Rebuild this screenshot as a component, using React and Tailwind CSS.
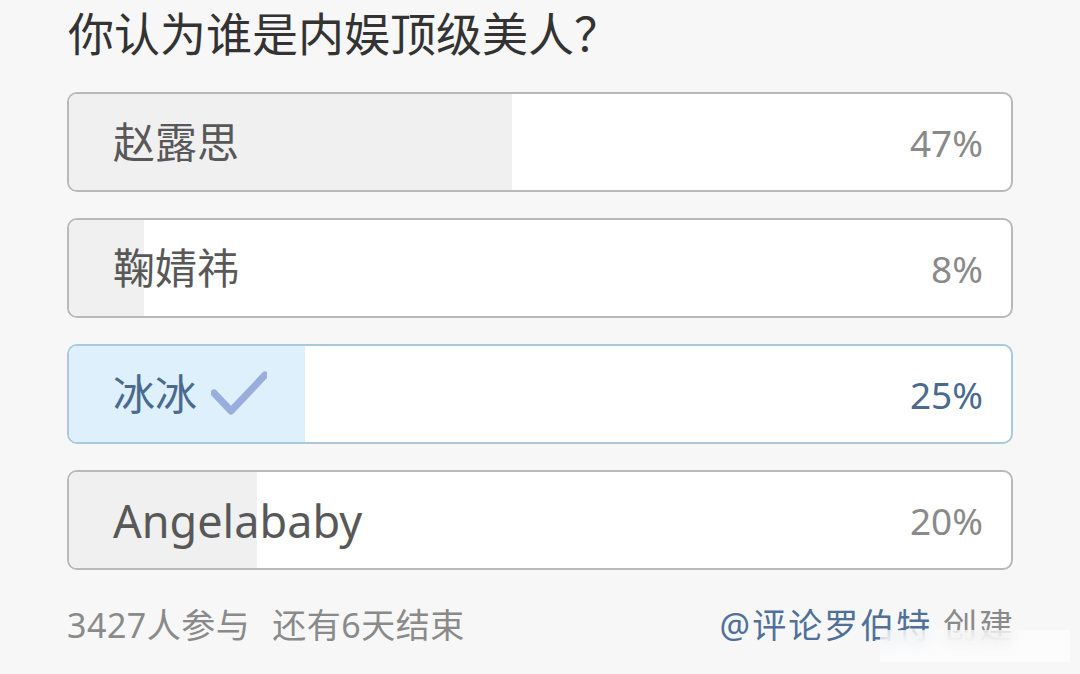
import React from "react";

const font = { fontFamily: '"Noto Sans", "Noto Sans CJK SC", sans-serif' };

function Check() {
  return (
    <svg width="56" height="46" viewBox="0 0 56 46" className="ml-[14px]">
      <path d="M3 22 L20 40 L54 4" fill="none" stroke="#9aaede" strokeWidth="7" strokeLinecap="round" strokeLinejoin="round" />
    </svg>
  );
}

function Option({ name, pct, selected, latin }) {
  return (
    <div
      className={`relative h-[100px] rounded-[10px] border-2 overflow-hidden bg-white ${selected ? "border-[#a9cadb]" : "border-[#b9b9b9]"}`}
    >
      <div
        className={`absolute left-0 top-0 bottom-0 ${selected ? "bg-[#def0fb]" : "bg-[#f0f0f0]"}`}
        style={{ width: `${pct}%` }}
      />
      <div className="relative flex h-full items-center justify-between pl-[44px] pr-[28px]">
        <div className="flex items-center">
          <span className={`${latin ? "text-[45px]" : "text-[42px]"} leading-none ${selected ? "text-[#4a6b8f]" : "text-[#585858]"}`}>{name}</span>
          {selected && <Check />}
        </div>
        <span className={`text-[37px] leading-none ${selected ? "text-[#4a6b8f]" : "text-[#8a8a8a]"}`}>{pct}%</span>
      </div>
    </div>
  );
}

export default function App() {
  return (
    <div className="relative w-[1080px] h-[674px] bg-[#f7f7f7] overflow-hidden" style={font}>
      <div className="px-[67px] pt-[10px]">
        <div className="text-[46px] leading-none text-[#333] pl-[1px]">你认为谁是内娱顶级美人？</div>
        <div className="mt-[36px] flex flex-col gap-[26px]">
          <Option name="赵露思" pct={47} />
          <Option name="鞠婧祎" pct={8} />
          <Option name="冰冰" pct={25} selected />
          <Option name="Angelababy" pct={20} latin />
        </div>
        <div className="mt-[38px] flex items-center justify-between text-[34px] leading-none">
          <div className="flex gap-[22px] text-[#8a8a8a] tracking-[0.5px]">
            <span>3427人参与</span>
            <span>还有6天结束</span>
          </div>
          <div className="text-[#8a8a8a] tracking-[2px] -mr-[2px]">
            <span className="text-[#4f7199]">@评论罗伯特</span> 创建
          </div>
        </div>
      </div>
      <div className="absolute left-[880px] top-[630px] w-[190px] h-[32px] bg-white/60 backdrop-blur-sm" />
    </div>
  );
}
